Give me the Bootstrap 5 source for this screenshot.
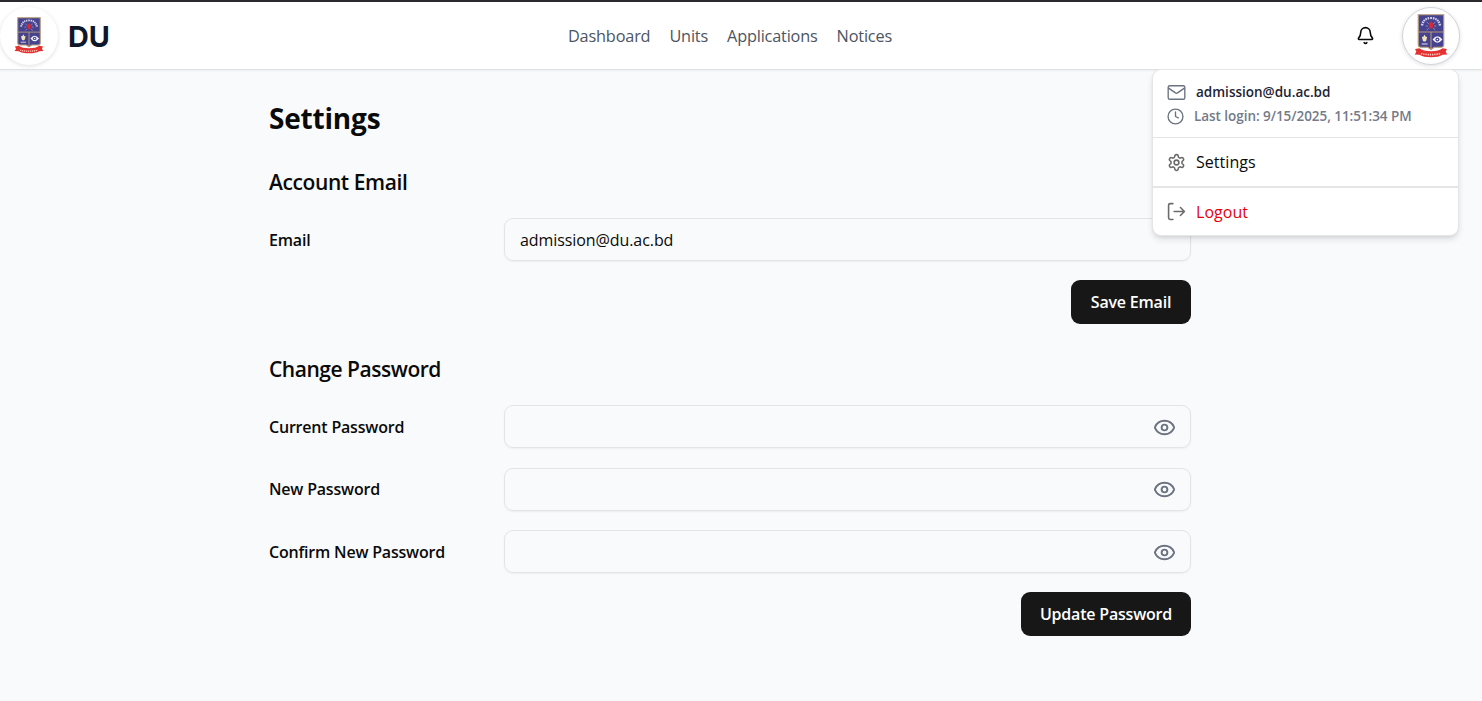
<!DOCTYPE html>
<html lang="en">
<head>
<meta charset="utf-8">
<meta name="viewport" content="width=device-width, initial-scale=1">
<title>DU – Settings</title>
<link href="https://cdn.jsdelivr.net/npm/bootstrap@5.3.0/dist/css/bootstrap.min.css" rel="stylesheet">
<style>
  html, body { height: 100%; overflow: hidden; }
  body { background: #f9fafc; color: #0a0a0a; font-family: "Open Sans", "Noto Sans", sans-serif; font-size: 16px; line-height: 24px; }
  .txt { white-space: nowrap; }
  .topbar { height: 70px; border-top: 2px solid #2b292e; border-bottom: 1px solid #dfe1e5; background: #fff; box-shadow: 0 1px 2px rgba(0,0,0,.05); }
  .brand-zone, .user-zone { flex: 1 1 0; }
  .user-zone { padding-right: 22px; }
  .seal { width: 58px; height: 58px; border-radius: 50%; background: #fff; box-shadow: 0 1px 4px rgba(0,0,0,.13); }
  .seal-user { border: 1px solid #d1d5db; }
  .bell { margin-right: 27px; }
  .brand-name { font-family: Inter, sans-serif; font-weight: 700; font-size: 28.8px; color: #0f172a; margin: 2px 0 0 10px; }
  .menu-links { gap: 19px; }
  .menu-links a { color: #4b5563; text-decoration: none; font-size: 16.3px; letter-spacing: -.18px; }
  .user-menu { position: absolute; top: 69px; right: 23px; width: 307px; height: 167px; border: 1px solid #e5e5e5; border-radius: 9px; background: #fff; box-shadow: 0 4px 7px -1px rgba(0,0,0,.12), 0 2px 4px -2px rgba(0,0,0,.1); z-index: 5; }
  .who { height: 68px; padding: 10px 14px 0; border-bottom: 1px solid #e5e5e5; font-size: 13.500px; font-weight: 600; }
  .who > div { height: 24px; gap: 10px; }
  .who-mail { color: #1e2433; }
  .who-last { color: #737a88; letter-spacing: -.05px; }
  .who svg { color: #6b7280; }
  .menu-row { height: 48px; padding: 0 14px; gap: 10px; letter-spacing: .05px; }
  .menu-row svg { color: #6b6b6b; }
  .menu-row + .menu-row { height: 49px; border-top: 2px solid #e5e5e5; }
  .logout { color: #e7000b; }
  .page-col { width: 922px; margin-left: 269px; padding-top: 28px; }
  .title-main { font-size: 28px; font-weight: 700; line-height: 40px; margin: 0 0 26px; letter-spacing: -.2px; }
  .title-sub { font-size: 21px; font-weight: 600; line-height: 36px; margin: 0 0 18px; letter-spacing: -.4px; }
  .title-next { margin-top: 27.300px; letter-spacing: -.47px; }
  .field { display: grid; grid-template-columns: 235px 1fr; align-items: center; margin-bottom: 19.100px; }
  .field label { font-size: 16px; font-weight: 600; letter-spacing: -.2px; }
  .box { height: 43.300px; border: 1px solid #e3e4e6; border-radius: 9px; padding: 1px 15px 0; box-shadow: 0 1px 2px rgba(0,0,0,.05); letter-spacing: -.08px; }
  .box svg { color: #6b7280; margin-right: -1px; }
  .btn-solid { background: #171717; color: #fff; border: 0; border-radius: 9px; height: 43.500px; padding: 0; font-weight: 600; font-size: 16px; letter-spacing: -.2px; }
  .btn-solid:hover { background: #333; color: #fff; }
  .btn-save { width: 120px; }
  .btn-update { width: 170px; }
  svg { flex: none; display: block; }
  .ln { fill: none; stroke: currentColor; stroke-linecap: round; stroke-linejoin: round; }
</style>
</head>
<body>
<svg width="0" height="0" class="position-absolute">
  <symbol id="crest" viewBox="0 0 32 44" preserveAspectRatio="none">
    <path d="M4 .8h24v30q0 2.500-2.500 2.500H19l-3 2.200-3-2.200H6.500Q4 33.300 4 30.800z" fill="#454390" stroke="#b99a75" stroke-width="1.1"/>
    <path d="M16 18v17M4 18h24" stroke="#b99a75" stroke-width="1"/>
    <path d="M7.500 11.500Q9 4 16 4t8.500 7.500" fill="none" stroke="#d0cee8" stroke-width="2.200" stroke-dasharray="1.500 .8"/>
    <path d="M12 8l2 2m4 0l2-2M11 12h2m6 0h2m-9 4l2-2m4 0l2 2" stroke="#9f9acb" stroke-width=".8"/>
    <path d="M16 7l2 3.500-.7 4h-2.600l-.7-4z" fill="#e0262e"/>
    <path d="M7.500 23l1.500-.5.900-2 .9 2 1.500.5-.7 3.500-.9 1H9.100l-.9-1z" fill="#efe2b8"/>
    <path d="M7.200 30h5.600" stroke="#c5c1e0" stroke-width="1.300"/>
    <path d="M17.500 25.500q4.500-6.500 9.200 0-4.700 6.500-9.200 0z" fill="#f4f2fa"/>
    <circle cx="22" cy="25.500" r="1.900" fill="#454390"/><circle cx="22" cy="25.500" r=".7" fill="#fff"/>
    <path d="M1 35l4-.8q3.500 3 11 3t11-3l4 .8-1.200 2.700 1.500 2.800-4.300.2q-4 2.500-11 2.500t-11-2.500l-4.300-.2 1.500-2.800z" fill="#e5312f"/>
    <path d="M6.500 39.500q9.500 2.300 19 0" fill="none" stroke="#f9c4bd" stroke-width="1.600" stroke-dasharray="1.300 .8"/>
  </symbol>
  <symbol id="eye" viewBox="0 0 24 24"><path class="ln" stroke-width="2" d="M2.062 12.348a1 1 0 0 1 0-.696 10.750 10.750 0 0 1 19.876 0 1 1 0 0 1 0 .696 10.750 10.750 0 0 1-19.876 0"/><circle class="ln" stroke-width="2" cx="12" cy="12" r="3"/></symbol>
</svg>

<header class="topbar d-flex align-items-center position-relative">
  <div class="brand-zone d-flex align-items-center">
    <div class="seal d-flex align-items-center justify-content-center"><svg width="30" height="37"><use href="#crest"/></svg></div>
    <span class="brand-name txt">DU</span>
  </div>
  <nav class="menu-links d-flex">
    <a class="txt" href="#">Dashboard</a><a class="txt" href="#">Units</a><a class="txt" href="#">Applications</a><a class="txt" href="#">Notices</a>
  </nav>
  <div class="user-zone d-flex align-items-center justify-content-end">
    <svg class="bell" width="19" height="19" viewBox="0 0 24 24"><path class="ln" stroke-width="2" d="M10.268 21a2 2 0 0 0 3.464 0M3.262 15.326A1 1 0 0 0 4 17h16a1 1 0 0 0 .740-1.673C19.410 13.956 18 12.499 18 8A6 6 0 0 0 6 8c0 4.499-1.411 5.956-2.738 7.326"/></svg>
    <div class="seal seal-user d-flex align-items-center justify-content-center"><svg width="34" height="44"><use href="#crest"/></svg></div>
  </div>
</header>

<div class="user-menu">
  <div class="who">
    <div class="d-flex align-items-center">
      <svg width="19" height="19" viewBox="0 0 24 24"><g class="ln" stroke-width="1.700"><rect x="1.500" y="3.500" width="21" height="17" rx="2"/><path d="M2 6.500l8.700 6a2.400 2.400 0 0 0 2.600 0l8.700-6"/></g></svg>
      <span class="txt who-mail">admission@du.ac.bd</span>
    </div>
    <div class="d-flex align-items-center">
      <svg width="17" height="17" viewBox="0 0 24 24"><g class="ln" stroke-width="1.900"><circle cx="12" cy="12" r="10.500"/><path d="M12 5.500v6.500l4 2"/></g></svg>
      <span class="txt who-last">Last login: 9/15/2025, 11:51:34 PM</span>
    </div>
  </div>
  <div class="menu-row d-flex align-items-center">
    <svg width="19" height="19" viewBox="0 0 24 24"><g class="ln" stroke-width="2"><path d="M12.220 2h-.440a2 2 0 0 0-2 2v.180a2 2 0 0 1-1 1.730l-.430.250a2 2 0 0 1-2 0l-.150-.080a2 2 0 0 0-2.730.730l-.220.380a2 2 0 0 0 .730 2.730l.150.100a2 2 0 0 1 1 1.720v.510a2 2 0 0 1-1 1.740l-.150.090a2 2 0 0 0-.730 2.730l.220.380a2 2 0 0 0 2.730.730l.150-.080a2 2 0 0 1 2 0l.430.250a2 2 0 0 1 1 1.730V20a2 2 0 0 0 2 2h.440a2 2 0 0 0 2-2v-.180a2 2 0 0 1 1-1.730l.430-.250a2 2 0 0 1 2 0l.150.080a2 2 0 0 0 2.730-.730l.220-.390a2 2 0 0 0-.730-2.730l-.150-.080a2 2 0 0 1-1-1.740v-.500a2 2 0 0 1 1-1.740l.150-.090a2 2 0 0 0 .730-2.730l-.220-.380a2 2 0 0 0-2.730-.730l-.150.080a2 2 0 0 1-2 0l-.430-.250a2 2 0 0 1-1-1.730V4a2 2 0 0 0-2-2z"/><circle cx="12" cy="12" r="3"/></g></svg>
    <span class="txt">Settings</span>
  </div>
  <div class="menu-row d-flex align-items-center">
    <svg width="19" height="19" viewBox="0 0 24 24"><path class="ln" stroke-width="2" d="M7.500 2H4a2 2 0 0 0-2 2v16a2 2 0 0 0 2 2h3.500M17 17l5-5-5-5M22 12H9"/></svg>
    <span class="txt logout">Logout</span>
  </div>
</div>

<main class="page-col">
  <h1 class="title-main">Settings</h1>
  <h2 class="title-sub">Account Email</h2>
  <div class="field"><label>Email</label><div class="box d-flex align-items-center"><span class="txt">admission@du.ac.bd</span></div></div>
  <div class="d-flex justify-content-end"><button class="btn btn-solid btn-save">Save Email</button></div>
  <h2 class="title-sub title-next">Change Password</h2>
  <div class="field"><label>Current Password</label><div class="box d-flex align-items-center justify-content-end"><svg width="23" height="23"><use href="#eye"/></svg></div></div>
  <div class="field"><label>New Password</label><div class="box d-flex align-items-center justify-content-end"><svg width="23" height="23"><use href="#eye"/></svg></div></div>
  <div class="field"><label>Confirm New Password</label><div class="box d-flex align-items-center justify-content-end"><svg width="23" height="23"><use href="#eye"/></svg></div></div>
  <div class="d-flex justify-content-end"><button class="btn btn-solid btn-update">Update Password</button></div>
</main>
<script src="https://cdn.jsdelivr.net/npm/bootstrap@5.3.0/dist/js/bootstrap.bundle.min.js"></script>
</body>
</html>
